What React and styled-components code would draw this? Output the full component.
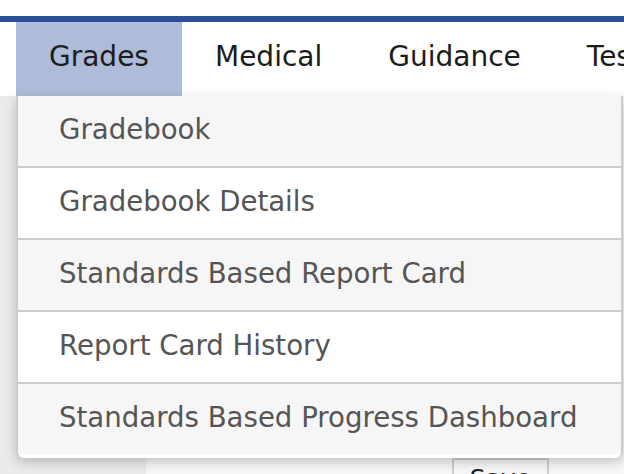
import React from "react";
import styled, { createGlobalStyle } from "styled-components";

const GlobalStyle = createGlobalStyle`
  html, body { margin: 0; padding: 0; background: #ffffff; }
  body { font-family: "DejaVu Sans", "Liberation Sans", sans-serif; overflow: hidden; }
`;

const Page = styled.div`
  width: 624px;
  height: 474px;
  display: flex;
  flex-direction: column;
  overflow: hidden;
`;

const TopSpace = styled.div`
  height: 16px;
  background: #ffffff;
`;

const BlueBar = styled.div`
  height: 6px;
  background: #2c4e97;
`;

const Nav = styled.nav`
  display: flex;
  height: 74px;
  padding-left: 16px;
  background: #ffffff;
  position: relative;
  z-index: 2;
`;

const TabWrap = styled.div`
  position: relative;
  display: flex;
`;

const Tab = styled.div`
  display: flex;
  align-items: center;
  padding: 0 33px 6px;
  font-size: 28px;
  color: #1c1c1c;
  white-space: nowrap;
  background: ${(p) => (p.$active ? "#aebcd9" : "transparent")};
`;

const Dropdown = styled.ul`
  position: absolute;
  top: 100%;
  left: 0;
  width: 603px;
  margin: 0;
  padding: 0 0 4px;
  list-style: none;
  background: #ffffff;
  border-left: 2px solid #cccccc;
  border-right: 2px solid #cccccc;
  border-radius: 0 0 7px 7px;
  box-shadow: 0 4px 12px rgba(0, 0, 0, 0.22);
  overflow: hidden;
`;

const Item = styled.li`
  height: 66px;
  display: flex;
  align-items: center;
  padding: 0 0 4px 41px;
  font-size: 27.6px;
  color: #555555;
  background: ${(p) => (p.$alt ? "#ffffff" : "#f6f6f6")};
  border-top: ${(p) => (p.$first ? "none" : "2px solid #cccccc")};
  white-space: nowrap;
`;

const Body = styled.div`
  flex: 1;
  display: flex;
  background: #f7f7f7;
`;

const Sidebar = styled.div`
  width: 146px;
  background: #ebebeb;
`;

const Main = styled.div`
  flex: 1;
  display: flex;
  align-items: flex-end;
  padding-left: 306px;
`;

const SaveButton = styled.button`
  width: 97px;
  height: 40px;
  margin-bottom: -24px;
  background: #f7f7f7;
  border: 2px solid #cfcfcf;
  border-bottom: none;
  border-radius: 2px;
  font-family: "DejaVu Sans", "Liberation Sans", sans-serif;
  font-size: 25px;
  color: #222222;
  padding: 0;
  line-height: 34px;
`;

const items = [
  "Gradebook",
  "Gradebook Details",
  "Standards Based Report Card",
  "Report Card History",
  "Standards Based Progress Dashboard",
];

export default function App() {
  return (
    <Page>
      <GlobalStyle />
      <TopSpace />
      <BlueBar />
      <Nav>
        <TabWrap>
          <Tab $active>Grades</Tab>
          <Dropdown>
            {items.map((t, i) => (
              <Item key={t} $first={i === 0} $alt={i % 2 === 1}>
                {t}
              </Item>
            ))}
          </Dropdown>
        </TabWrap>
        <Tab>Medical</Tab>
        <Tab>Guidance</Tab>
        <Tab>Testing</Tab>
      </Nav>
      <Body>
        <Sidebar />
        <Main>
          <SaveButton>Save</SaveButton>
        </Main>
      </Body>
    </Page>
  );
}
